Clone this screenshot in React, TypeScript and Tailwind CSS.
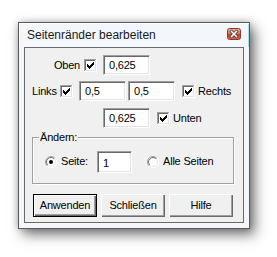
import React from "react";

function Check() {
  return (
    <svg width="13" height="13" viewBox="0 0 13 13" shapeRendering="crispEdges" className="shrink-0">
      <rect x="0" y="0" width="13" height="13" fill="#fff" />
      <path d="M0 0h12v1H0zM0 0h1v12H0z" fill="#a0a0a0" />
      <path d="M1 1h10v1H1zM1 1h1v10H1z" fill="#696969" />
      <path d="M1 11h11v1H1zM11 1h1v11h-1z" fill="#e3e3e3" />
      <path
        d="M3 5h1v3H3zM4 6h1v3H4zM5 7h1v3H5zM6 6h1v3H6zM7 5h1v3H7zM8 4h1v3H8zM9 3h1v3H9z"
        fill="#000"
      />
    </svg>
  );
}

function Radio({ on }: { on?: boolean }) {
  return (
    <svg width="12" height="12" viewBox="0 0 12 12" className="shrink-0">
      <defs>
        <linearGradient id="rOuter" x1="0" y1="0" x2="1" y2="1">
          <stop offset="0.45" stopColor="#a0a0a0" />
          <stop offset="0.55" stopColor="#ffffff" />
        </linearGradient>
        <linearGradient id="rInner" x1="0" y1="0" x2="1" y2="1">
          <stop offset="0.45" stopColor="#696969" />
          <stop offset="0.55" stopColor="#e3e3e3" />
        </linearGradient>
      </defs>
      <circle cx="6" cy="6" r="5.5" fill="#fff" stroke="url(#rOuter)" strokeWidth="1" />
      <circle cx="6" cy="6" r="4.5" fill="#fff" stroke="url(#rInner)" strokeWidth="1" />
      {on && <circle cx="6" cy="6" r="2" fill="#000" />}
    </svg>
  );
}

function CloseBtn() {
  return (
    <svg width="14" height="12" viewBox="0 0 14 12" className="shrink-0">
      <defs>
        <linearGradient id="cb" x1="0" y1="0" x2="0" y2="1">
          <stop offset="0" stopColor="#eab09c" />
          <stop offset="0.45" stopColor="#d87a60" />
          <stop offset="0.55" stopColor="#c4452c" />
          <stop offset="1" stopColor="#dc6c4e" />
        </linearGradient>
      </defs>
      <rect x="0.5" y="0.5" width="13" height="11" rx="2" fill="url(#cb)" stroke="#8a3a2a" />
      <path d="M4.5 3.5l5 5M9.5 3.5l-5 5" stroke="#3c2a28" strokeWidth="3" strokeLinecap="square" />
      <path d="M4.5 3.5l5 5M9.5 3.5l-5 5" stroke="#fff" strokeWidth="1.6" strokeLinecap="square" />
    </svg>
  );
}

const edit =
  "bg-white border border-t-[#a0a0a0] border-l-[#a0a0a0] border-r-white border-b-white shadow-[inset_1px_1px_0_#696969,inset_-1px_-1px_0_#e3e3e3] flex items-center pl-[5px] shrink-0";

const btn =
  "w-[64px] h-[23px] bg-[#f0f0f0] flex items-center justify-center shrink-0 shadow-[inset_1px_1px_0_#fff,inset_-1px_-1px_0_#696969,inset_-2px_-2px_0_#a0a0a0]";

export default function App() {
  return (
    <div className="min-h-[257px] bg-white pt-[22px] pl-[18px] font-['Liberation_Sans',Arial,sans-serif] text-black">
      <div className="w-[232px] h-[207px] border border-[#5a5a5a] bg-[#f3f7fc] shadow-[5px_6px_12px_rgba(0,0,0,0.5),0_0_7px_rgba(0,0,0,0.25)] flex flex-col">
        {/* title bar */}
        <div className="h-[24px] flex items-start justify-between pl-[8px] pr-[8px] shadow-[inset_1px_1px_0_#fff,inset_-1px_0_0_#a8dcef]">
          <span className="text-[12px] leading-[24px] text-[#1a1a1a]">Seitenränder bearbeiten</span>
          <div className="mt-[5px]">
            <CloseBtn />
          </div>
        </div>

        {/* client area */}
        <div className="mx-[5px] mb-[5px] flex-1 border border-[#6a6a6a] bg-[#f0f0f0] flex flex-col text-[11px] tracking-[-0.2px]">
          {/* Oben */}
          <div className="mt-[7px] h-[20px] flex items-center">
            <span className="w-[55px] text-right">Oben</span>
            <div className="ml-[4px]">
              <Check />
            </div>
            <div className={edit + " ml-[6px] w-[47px] h-[20px]"}>0,625</div>
          </div>

          {/* Links / Rechts */}
          <div className="mt-[6px] h-[20px] flex items-center pl-[7px]">
            <span className="w-[28px]">Links</span>
            <Check />
            <div className={edit + " ml-[6px] w-[47px] h-[20px]"}>0,5</div>
            <div className={edit + " ml-[2px] w-[47px] h-[20px]"}>0,5</div>
            <div className="ml-[7px]">
              <Check />
            </div>
            <span className="ml-[3px]">Rechts</span>
          </div>

          {/* Unten */}
          <div className="mt-[7px] h-[20px] flex items-center pl-[78px]">
            <div className={edit + " w-[47px] h-[20px]"}>0,625</div>
            <div className="ml-[7px]">
              <Check />
            </div>
            <span className="ml-[3px]">Unten</span>
          </div>

          {/* Ändern group */}
          <div className="relative mt-[9px] ml-[7px] w-[202px] h-[47px] border border-[#a0a0a0] shadow-[inset_1px_1px_0_#fff,1px_1px_0_#fff] flex items-center pl-[12px] pt-[2px]">
            <span className="absolute left-[6px] top-[-8px] bg-[#f0f0f0] px-[1px] leading-[14px]">Ändern:</span>
            <Radio on />
            <span className="ml-[4px] w-[36px]">Seite:</span>
            <div className={edit + " w-[35px] h-[22px] items-start pt-[3px]"}>1</div>
            <div className="ml-[15px]">
              <Radio />
            </div>
            <span className="ml-[4px]">Alle Seiten</span>
          </div>

          {/* buttons */}
          <div className="mt-[10px] ml-[8px] flex gap-[4px]">
            <div className={btn + " border border-black"}>Anwenden</div>
            <div className={btn}>Schließen</div>
            <div className={btn}>Hilfe</div>
          </div>
        </div>
      </div>
    </div>
  );
}
